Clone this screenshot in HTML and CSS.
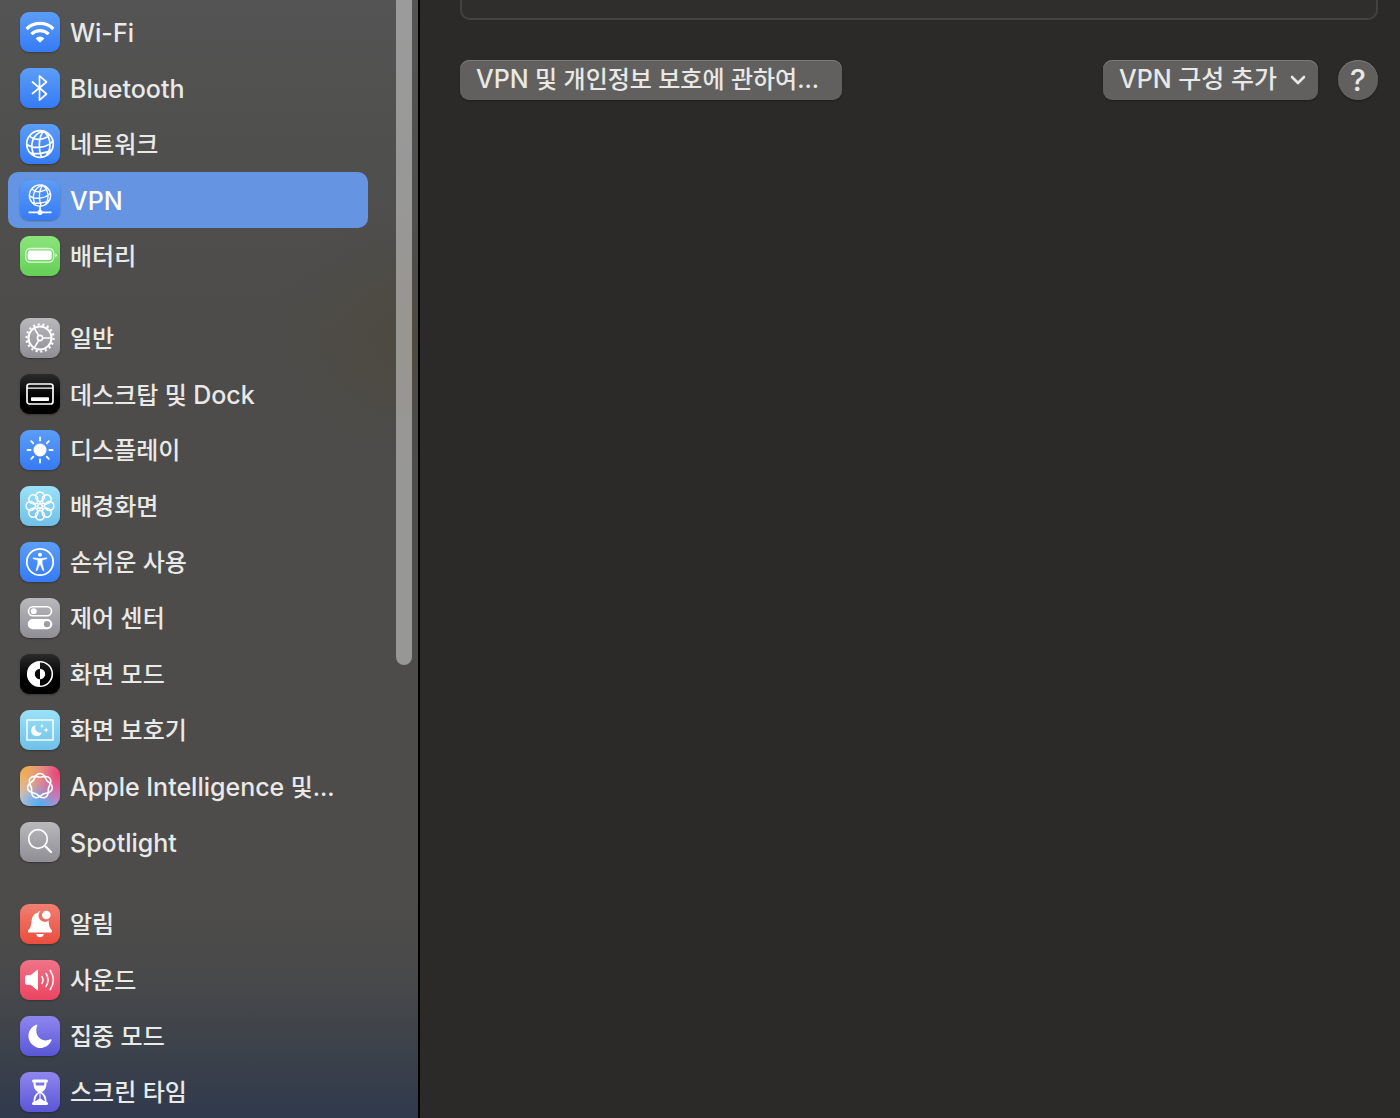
FILE: index.html
```html
<!DOCTYPE html>
<html lang="ko">
<head>
<meta charset="utf-8">
<meta name="viewport" content="width=device-width, initial-scale=1">
<title>VPN</title>
<link rel="stylesheet" href="styles.css">
</head>
<body>
<div class="window">
  <aside class="sidebar">
    <nav class="nav" aria-label="설정">
      <ul class="group">
        <li><a class="item" href="#wifi"><svg class="icon blue" viewBox="0 0 40 40" aria-hidden="true"><g fill="none" stroke="#fff" stroke-width="3.2"><path d="M6.6 17A19 19 0 0 1 33.4 17"/><path d="M11.4 22.2A12.2 12.2 0 0 1 28.600 22.2"/></g><path fill="#fff" d="M15.600 26.400A6.300 6.300 0 0 1 24.400 26.400L20 30.800Z"/></svg><span class="label latin">Wi-Fi</span></a></li>
        <li><a class="item" href="#bluetooth"><svg class="icon blue" viewBox="0 0 40 40" aria-hidden="true"><path fill="none" stroke="#fff" stroke-width="1.7" stroke-linejoin="round" stroke-linecap="round" d="M12.500 14L26.500 26L19.500 32.200V7.800L26.500 14L12.500 25.500"/></svg><span class="label latin">Bluetooth</span></a></li>
        <li><a class="item" href="#network"><svg class="icon blue" viewBox="0 0 40 40" aria-hidden="true"><g id="globe" fill="none" stroke="#fff" stroke-width="1.7"><circle cx="20" cy="20" r="13.300"/><path d="M23.500 7C13 9.500 8.500 21 14.500 32M23.500 7C18 14 18.500 26 21.500 33.300M23.500 7C31 13 32 24 26.500 31.500M9.500 12C14.500 17 24.500 16 29.500 10.800M6.800 20.500C14 25.500 27 24 33 17M10 28.800C16 30.500 26 29.500 31.500 26"/></g></svg><span class="label">네트워크</span></a></li>
        <li><a class="item selected" href="#vpn" aria-current="page"><svg class="icon blue" viewBox="0 0 40 40" aria-hidden="true"><use href="#globe" transform="translate(4 -.5) scale(.8)"/><path fill="none" stroke="#fff" stroke-width="1.800" d="M20 26V32M8.500 32.300H31.500"/><circle cx="20" cy="32.300" r="2.600" fill="#fff"/></svg><span class="label latin">VPN</span></a></li>
        <li><a class="item" href="#battery"><svg class="icon green" viewBox="0 0 40 40" aria-hidden="true"><rect x="5.700" y="12.500" width="28" height="13.600" rx="4.500" fill="none" stroke="#fff" stroke-opacity=".8" stroke-width="1.300"/><rect x="7.700" y="14.500" width="24" height="9.600" rx="2.500" fill="#fff"/><path fill="#fff" fill-opacity=".8" d="M35.300 17.200Q38.500 19.300 35.300 21.500Z"/></svg><span class="label">배터리</span></a></li>
      </ul>
      <ul class="group">
        <li><a class="item" href="#general"><svg class="icon gray" viewBox="0 0 40 40" aria-hidden="true"><g fill="none" stroke="#fff"><circle cx="20" cy="20" r="11.500" stroke-width="2"/><circle cx="20" cy="20" r="13.500" stroke-width="2.200" pathLength="36" stroke-dasharray=".9 1.100"/><circle cx="20" cy="20" r="2.600" stroke-width="1.600"/><path stroke-width="1.600" d="M22.700 20H31.500M18.700 17.700L14.200 10M18.700 22.300L14.200 30"/></g></svg><span class="label">일반</span></a></li>
        <li><a class="item" href="#desktop"><svg class="icon black" viewBox="0 0 40 40" aria-hidden="true"><rect x="7" y="10" width="26" height="20" rx="2.500" fill="none" stroke="#fff" stroke-width="1.700"/><path stroke="#fff" stroke-width="1.300" d="M7 14.200H33"/><rect x="11" y="23.300" width="18" height="3.700" rx=".8" fill="#fff"/></svg><span class="label">데스크탑 및 <span class="latin">Dock</span></span></a></li>
        <li><a class="item" href="#display"><svg class="icon blue" viewBox="0 0 40 40" aria-hidden="true"><circle cx="20" cy="20" r="6.500" fill="#fff"/><path stroke="#fff" stroke-width="1.900" stroke-linecap="round" d="M20 7.500V10.500M20 29.500V32.500M7.500 20H10.500M29.500 20H32.500M11.200 11.200L13.300 13.300M26.700 26.700L28.800 28.800M28.800 11.200L26.700 13.300M13.300 26.700L11.200 28.800"/></svg><span class="label">디스플레이</span></a></li>
        <li><a class="item" href="#wallpaper"><svg class="icon sky" viewBox="0 0 40 40" aria-hidden="true"><g fill="none" stroke="#fff" stroke-width="1.400"><circle cx="20" cy="20" r="2.200"/><g id="petals"><path id="petal" d="M20 17.800V15.500M17.200 14.300C15.400 12.500 15.200 10 16.200 8.200A4.400 4.400 0 0 1 23.800 8.200C24.800 10 24.600 12.500 22.800 14.300Q20 16.500 17.200 14.300Z"/><use href="#petal" transform="rotate(90 20 20)"/><use href="#petal" transform="rotate(180 20 20)"/><use href="#petal" transform="rotate(270 20 20)"/></g><use href="#petals" transform="rotate(45 20 20)"/></g></svg><span class="label">배경화면</span></a></li>
        <li><a class="item" href="#accessibility"><svg class="icon blue" viewBox="0 0 40 40" aria-hidden="true"><circle cx="20" cy="20" r="13.200" fill="none" stroke="#fff" stroke-width="1.800"/><circle cx="20" cy="12.700" r="2" fill="#fff"/><path fill="#fff" stroke="#fff" stroke-width=".5" stroke-linejoin="round" d="M13.200 15.800L18.500 16.500H21.500L26.800 15.800V16.800L22.200 18V21.500L24 28.500L23 28.800L20.300 22.500H19.700L17 28.800L16 28.500L17.800 21.500V18L13.200 16.800Z"/></svg><span class="label">손쉬운 사용</span></a></li>
        <li><a class="item" href="#control-center"><svg class="icon gray" viewBox="0 0 40 40" aria-hidden="true"><rect x="8.500" y="8.700" width="23" height="9" rx="4.500" fill="none" stroke="#fff" stroke-width="1.600"/><circle cx="13.800" cy="13.200" r="2.900" fill="#fff"/><path fill="#fff" fill-rule="evenodd" d="M12.800 21H27.200A5.100 5.100 0 0 1 27.200 31.200H12.800A5.100 5.100 0 0 1 12.800 21ZM27 22.900A3.200 3.200 0 1 0 27 29.300A3.200 3.200 0 1 0 27 22.900Z"/></svg><span class="label">제어 센터</span></a></li>
        <li><a class="item" href="#appearance"><svg class="icon black" viewBox="0 0 40 40" aria-hidden="true"><circle cx="20" cy="20" r="12.300" fill="none" stroke="#fff" stroke-width="1.600"/><path fill="#fff" d="M20 7.500A12.500 12.500 0 0 0 20 32.500V25.200A5.200 5.200 0 0 1 20 14.800ZM20 14.800A5.200 5.200 0 0 1 20 25.200Z"/></svg><span class="label">화면 모드</span></a></li>
        <li><a class="item" href="#screensaver"><svg class="icon sky" viewBox="0 0 40 40" aria-hidden="true"><rect x="7" y="10" width="26" height="20" fill="none" stroke="#fff" stroke-width="1.400"/><path fill="#fff" d="M15.800 15.200A5.500 5.500 0 1 0 22 22.300A5 5 0 0 1 15.800 15.200ZM22 13.800L22.600 15.400L24.200 16L22.600 16.600L22 18.200L21.400 16.600L19.800 16L21.400 15.400ZM26.200 17.300L26.900 19.300L28.900 20L26.900 20.700L26.200 22.700L25.500 20.700L23.500 20L25.500 19.300Z"/></svg><span class="label">화면 보호기</span></a></li>
        <li><a class="item" href="#intelligence"><svg class="icon rainbow" viewBox="0 0 40 40" aria-hidden="true"><g fill="none" stroke="#fff" stroke-width="1.600"><path id="strand" d="M20 7.500C24.800 7.500 25.200 12.200 26.800 14.500S33.200 18.200 32.190 22.780"/><use href="#strand" transform="rotate(51.430 20 20)"/><use href="#strand" transform="rotate(102.860 20 20)"/><use href="#strand" transform="rotate(154.290 20 20)"/><use href="#strand" transform="rotate(205.710 20 20)"/><use href="#strand" transform="rotate(257.140 20 20)"/><use href="#strand" transform="rotate(308.570 20 20)"/></g></svg><span class="label"><span class="latin">Apple Intelligence</span> 및...</span></a></li>
        <li><a class="item" href="#spotlight"><svg class="icon gray" viewBox="0 0 40 40" aria-hidden="true"><circle cx="18" cy="17" r="9.300" fill="none" stroke="#fff" stroke-width="1.700"/><path stroke="#fff" stroke-width="2.300" stroke-linecap="round" d="M25 24L31 30"/></svg><span class="label latin">Spotlight</span></a></li>
      </ul>
      <ul class="group">
        <li><a class="item" href="#notifications"><svg class="icon red" viewBox="0 0 40 40" aria-hidden="true"><path fill="#fff" d="M20.800 6.800A5.900 5.900 0 0 0 28.600 16.500C29 21.500 29.500 24 32 26.500Q32.500 28.500 31 28.500H9Q7.500 28.500 8 26.500C11.500 23 11 20 11.800 15.500C12.700 11 15 9.300 18 8.700C18.200 7.500 19.300 6.800 20.800 6.800ZM16.200 30H23.800Q23 33.200 20 33.200Q17 33.200 16.200 30Z"/><circle cx="26.300" cy="11" r="4.300" fill="#fff"/></svg><span class="label">알림</span></a></li>
        <li><a class="item" href="#sound"><svg class="icon pink" viewBox="0 0 40 40" aria-hidden="true"><path fill="#fff" stroke="#fff" stroke-linejoin="round" d="M6.500 15.700H10.500L17.500 10.200V29.800L10.500 24.300H6.500Q5.500 24.300 5.500 23.300V16.700Q5.500 15.700 6.500 15.700Z"/><path fill="none" stroke="#fff" stroke-width="1.500" stroke-linecap="round" d="M21.800 16.500Q24.200 20 21.800 23.500M26 13.500Q30.200 20 26 26.500M30.200 10.500Q36.500 20 30.200 29.500"/></svg><span class="label">사운드</span></a></li>
        <li><a class="item" href="#focus"><svg class="icon indigo" viewBox="0 0 40 40" aria-hidden="true"><path fill="#fff" d="M16 8.800A12 12 0 1 0 31.500 24.600C32 23.600 31 23 30 23.600C21.500 27 13.500 19 17.200 9.800C17.700 8.800 17 8.400 16 8.800Z"/></svg><span class="label">집중 모드</span></a></li>
        <li><a class="item" href="#screen-time"><svg class="icon indigo" viewBox="0 0 40 40" aria-hidden="true"><path fill="#fff" fill-rule="evenodd" d="M13.500 7.500H26.500Q28 7.500 28 9T26.500 10.500C26.500 15.500 25.500 17.500 22 20.200C25.500 23 26.500 25 26.500 30Q28 30 28 31.500T26.500 33H13.500Q12 33 12 31.500T13.500 30C13.500 25 14.500 23 18 20.200C14.500 17.500 13.500 15.500 13.500 10.500Q12 10.500 12 9T13.500 7.500ZM15.500 10.500L15.900 13.500H24.100L24.500 10.500ZM19.500 21C16.500 23.500 15.500 25.500 15.200 29.500L19.500 26.500ZM20.500 21V26.500L24.800 29.500C24.500 25.500 23.500 23.500 20.500 21Z"/></svg><span class="label">스크린 타임</span></a></li>
      </ul>
    </nav>
    <div class="scroll-thumb"></div>
  </aside>
  <main class="content">
    <div class="card"></div>
    <div class="actions">
      <button class="control about" type="button"><span class="latin">VPN</span> 및 개인정보 보호에 관하여...</button>
      <div class="picker">
        <select class="control" aria-label="VPN 구성 추가"><option>VPN 구성 추가</option></select>
        <svg class="chevron" viewBox="0 0 16 10" aria-hidden="true"><path fill="none" stroke="#e8e8e7" stroke-width="2.600" stroke-linecap="round" stroke-linejoin="round" d="M2 2L8 8L14 2"/></svg>
      </div>
      <button class="control help" type="button" aria-label="도움말">?</button>
    </div>
  </main>
</div>
</body>
</html>
```
FILE: styles.css
```css
* { box-sizing: border-box; }

body {
  margin: 0;
  background: #2b2a28;
  color: #e9e9e8;
  font-family: Inter, "Noto Sans CJK KR", sans-serif;
  font-size: 24px;
  font-weight: 500;
}

.window {
  display: grid;
  grid-template-columns: 420px 1fr;
  height: 100vh;
}

.sidebar {
  position: relative;
  overflow: hidden;
  border-right: 2px solid #000;
  background:
    radial-gradient(ellipse 150px 130px at 100% 30%, rgba(78, 73, 62, .8), rgba(78, 73, 62, 0)),
    linear-gradient(#545454, #4f4f4e 14%, #4d4c4a 30%, #4d4c4a 80%, #4a4a4a 86%, #3e434a 93%, #303a4d);
}

.nav {
  display: flex;
  flex-direction: column;
  gap: 26px;
  padding: 4px 50px 4px 8px;
}

.group {
  margin: 0;
  padding: 0;
  list-style: none;
}

.item {
  display: flex;
  align-items: center;
  gap: 10px;
  height: 56px;
  padding: 0 12px;
  border-radius: 10px;
  color: inherit;
  text-decoration: none;
}

.selected {
  background: #6494e2;
  color: #fff;
}

.label {
  padding-top: 2px;
  line-height: 36px;
  white-space: nowrap;
}

.latin { font-size: 25px; }

.icon {
  flex: none;
  width: 40px;
  height: 40px;
  border-radius: 9px;
  box-shadow: 0 1px 2px rgba(0, 0, 0, .3);
}

.blue { background: linear-gradient(#5c9df6, #357bf6); }
.green { background: linear-gradient(#8be57d, #65cf56); }
.gray { background: linear-gradient(#b9b8bc, #8f8e94); }
.black { background: linear-gradient(#2b2b2b, #000 60%); }
.sky { background: linear-gradient(#9be2f7, #6fbfe8); }
.red { background: linear-gradient(#f07f72, #ea4d3d); }
.pink { background: linear-gradient(#f07488, #ea4560); }
.indigo { background: linear-gradient(#8e86ee, #5a56d6); }

.rainbow {
  background:
    radial-gradient(circle at 0 0, #f2a638, rgba(242, 166, 56, 0) 60%),
    radial-gradient(circle at 100% 20%, #ee4468, rgba(238, 68, 104, 0) 70%),
    radial-gradient(circle at 50% 100%, #45b0f2, rgba(69, 176, 242, 0) 60%),
    linear-gradient(90deg, #d9c7c4, #c890ee);
}

.scroll-thumb {
  position: absolute;
  top: -8px;
  right: 6px;
  width: 16px;
  height: 60.2%;
  border-radius: 8px;
  background: rgba(255, 255, 255, .42);
}

.content {
  padding: 0 22px 0 40px;
}

.card {
  height: 20px;
  border: 2px solid #434240;
  border-top: 0;
  border-radius: 0 0 10px 10px;
  background: #2f2e2c;
}

.actions {
  display: flex;
  align-items: center;
  gap: 20px;
  padding-top: 40px;
}

.control {
  height: 40px;
  padding: 0 16px 2px;
  border: 0;
  border-radius: 9px;
  background: #61605e;
  box-shadow: inset 0 1px #7b7a78, 0 1px 2px rgba(0, 0, 0, .35);
  color: #e8e8e7;
  font: inherit;
  line-height: 36px;
  white-space: nowrap;
}

.about {
  min-width: 382px;
  margin-right: auto;
  text-align: left;
}

.picker {
  display: grid;
  align-items: center;
}

.picker select,
.chevron { grid-area: 1 / 1; }

.picker select {
  min-width: 214px;
  padding-right: 40px;
  appearance: none;
  font-size: 25px;
}

.chevron {
  justify-self: end;
  width: 16px;
  height: 10px;
  margin-right: 12px;
  pointer-events: none;
}

.help {
  width: 40px;
  padding: 0;
  border-radius: 50%;
  font-size: 30px;
  font-weight: 500;
  line-height: 40px;
}
```
